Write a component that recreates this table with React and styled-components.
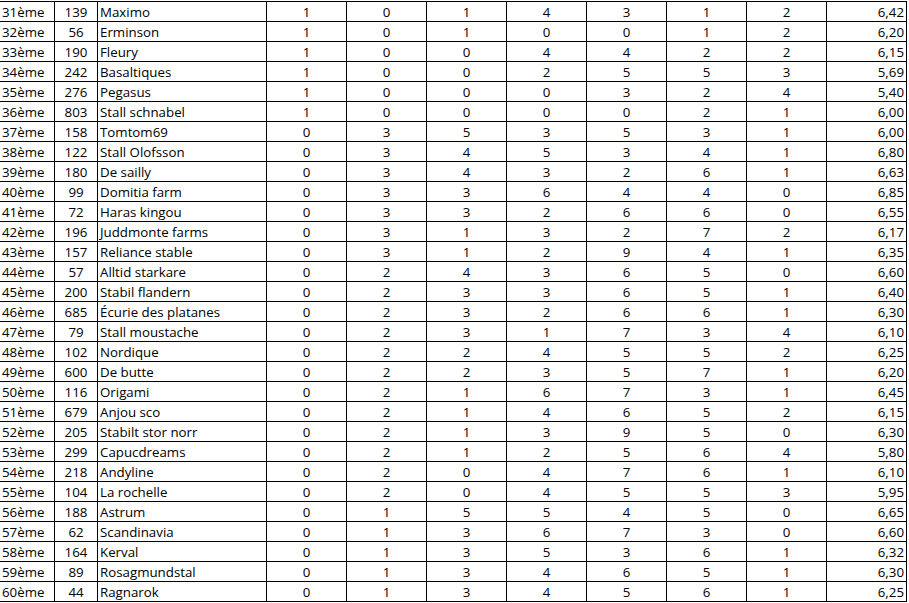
import React from "react";
import styled, { createGlobalStyle } from "styled-components";

const Global = createGlobalStyle`
  html, body { margin: 0; padding: 0; background: #ffffff; }
  body { font-family: "Open Sans", "Liberation Sans", sans-serif; }
`;

const rows = [
  ["31ème", 139, "Maximo", 1, 0, 1, 4, 3, 1, 2, "6,42"],
  ["32ème", 56, "Erminson", 1, 0, 1, 0, 0, 1, 2, "6,20"],
  ["33ème", 190, "Fleury", 1, 0, 0, 4, 4, 2, 2, "6,15"],
  ["34ème", 242, "Basaltiques", 1, 0, 0, 2, 5, 5, 3, "5,69"],
  ["35ème", 276, "Pegasus", 1, 0, 0, 0, 3, 2, 4, "5,40"],
  ["36ème", 803, "Stall schnabel", 1, 0, 0, 0, 0, 2, 1, "6,00"],
  ["37ème", 158, "Tomtom69", 0, 3, 5, 3, 5, 3, 1, "6,00"],
  ["38ème", 122, "Stall Olofsson", 0, 3, 4, 5, 3, 4, 1, "6,80"],
  ["39ème", 180, "De sailly", 0, 3, 4, 3, 2, 6, 1, "6,63"],
  ["40ème", 99, "Domitia farm", 0, 3, 3, 6, 4, 4, 0, "6,85"],
  ["41ème", 72, "Haras kingou", 0, 3, 3, 2, 6, 6, 0, "6,55"],
  ["42ème", 196, "Juddmonte farms", 0, 3, 1, 3, 2, 7, 2, "6,17"],
  ["43ème", 157, "Reliance stable", 0, 3, 1, 2, 9, 4, 1, "6,35"],
  ["44ème", 57, "Alltid starkare", 0, 2, 4, 3, 6, 5, 0, "6,60"],
  ["45ème", 200, "Stabil flandern", 0, 2, 3, 3, 6, 5, 1, "6,40"],
  ["46ème", 685, "Écurie des platanes", 0, 2, 3, 2, 6, 6, 1, "6,30"],
  ["47ème", 79, "Stall moustache", 0, 2, 3, 1, 7, 3, 4, "6,10"],
  ["48ème", 102, "Nordique", 0, 2, 2, 4, 5, 5, 2, "6,25"],
  ["49ème", 600, "De butte", 0, 2, 2, 3, 5, 7, 1, "6,20"],
  ["50ème", 116, "Origami", 0, 2, 1, 6, 7, 3, 1, "6,45"],
  ["51ème", 679, "Anjou sco", 0, 2, 1, 4, 6, 5, 2, "6,15"],
  ["52ème", 205, "Stabilt stor norr", 0, 2, 1, 3, 9, 5, 0, "6,30"],
  ["53ème", 299, "Capucdreams", 0, 2, 1, 2, 5, 6, 4, "5,80"],
  ["54ème", 218, "Andyline", 0, 2, 0, 4, 7, 6, 1, "6,10"],
  ["55ème", 104, "La rochelle", 0, 2, 0, 4, 5, 5, 3, "5,95"],
  ["56ème", 188, "Astrum", 0, 1, 5, 5, 4, 5, 0, "6,65"],
  ["57ème", 62, "Scandinavia", 0, 1, 3, 6, 7, 3, 0, "6,60"],
  ["58ème", 164, "Kerval", 0, 1, 3, 5, 3, 6, 1, "6,32"],
  ["59ème", 89, "Rosagmundstal", 0, 1, 3, 4, 6, 5, 1, "6,30"],
  ["60ème", 44, "Ragnarok", 0, 1, 3, 4, 5, 6, 1, "6,25"],
];

const Sheet = styled.div`
  padding-top: 1px;
  width: 907px;
`;

const Grid = styled.div`
  border-top: 1px solid #000;
`;

const Row = styled.div`
  display: grid;
  grid-template-columns: 55px 43px 169px repeat(8, 80px);
  height: 20px;
  box-sizing: border-box;
  border-bottom: 1px solid #000;
`;

const Cell = styled.div`
  box-sizing: border-box;
  border-right: 1px solid #000;
  font-size: 13.3px;
  line-height: 18px;
  padding-top: 1px;
  color: #000;
  white-space: nowrap;
  overflow: hidden;
  text-align: ${(p) => p.$align || "center"};
  padding-left: ${(p) => (p.$align === "left" ? "2px" : "0")};
  padding-right: ${(p) => (p.$align === "right" ? "2px" : "0")};
`;

export default function App() {
  return (
    <>
      <Global />
      <Sheet>
        <Grid>
          {rows.map((r) => (
            <Row key={r[0]}>
              <Cell $align="left">{r[0]}</Cell>
              <Cell>{r[1]}</Cell>
              <Cell $align="left">{r[2]}</Cell>
              {r.slice(3, 10).map((v, i) => (
                <Cell key={i}>{v}</Cell>
              ))}
              <Cell $align="right">{r[10]}</Cell>
            </Row>
          ))}
        </Grid>
      </Sheet>
    </>
  );
}
